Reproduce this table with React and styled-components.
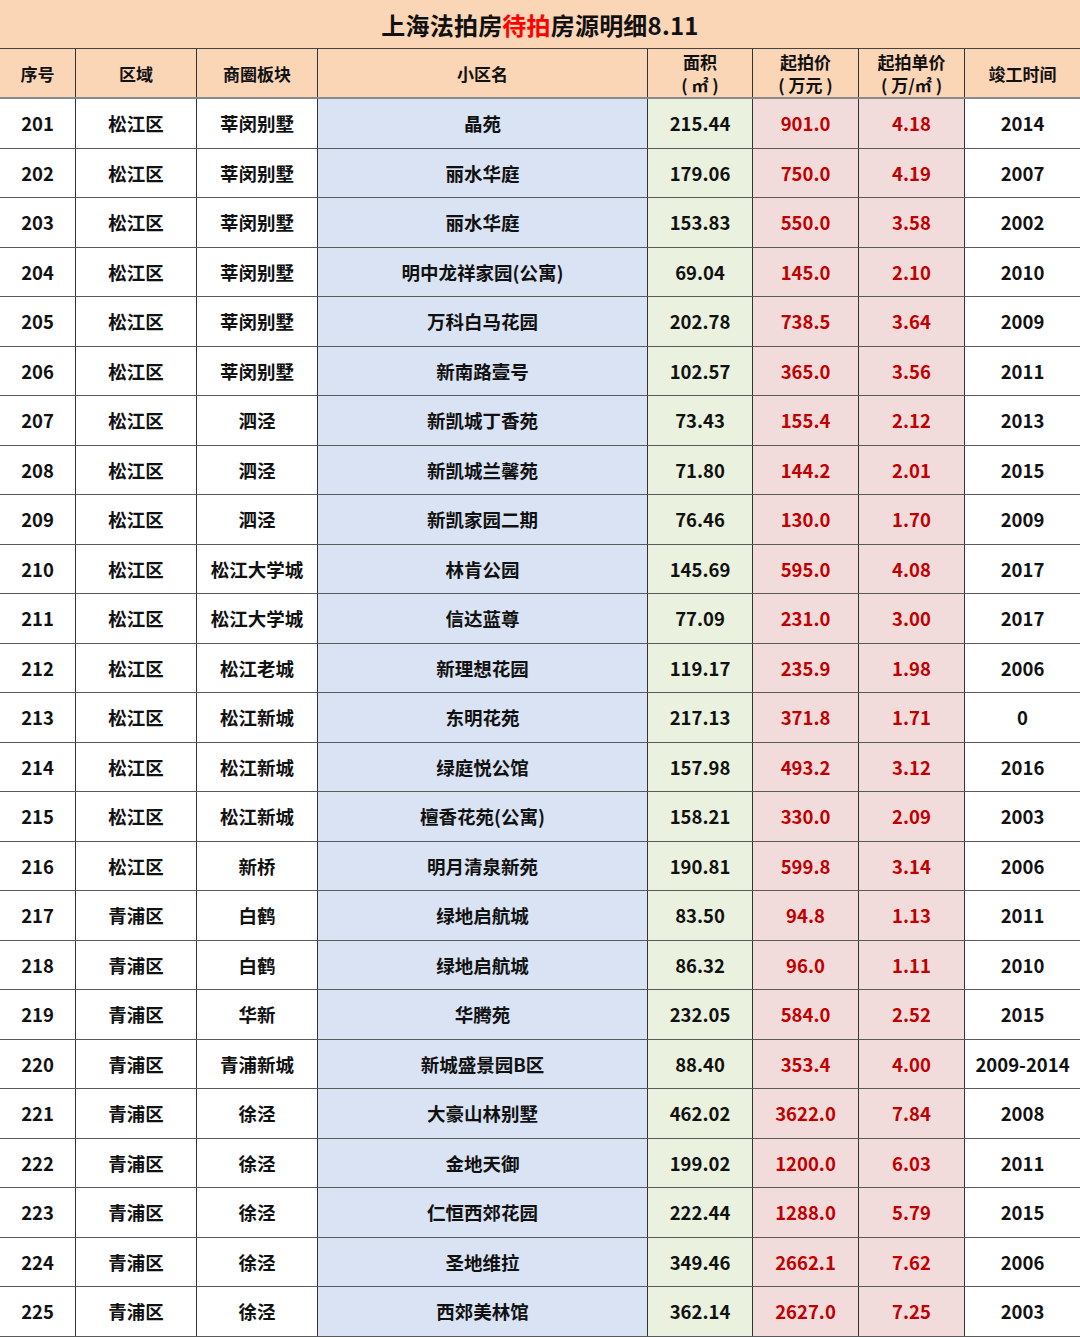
import React from 'react'
import styled, { createGlobalStyle } from 'styled-components'

const GlobalStyle = createGlobalStyle`
  html, body { margin: 0; padding: 0; background: #ffffff; }
  body { font-family: "Microsoft YaHei", "Noto Sans CJK SC", "Noto Sans", sans-serif; }
`

const COLS = '76px 121px 121px 330px 105px 106px 106px 115px'

const Sheet = styled.div`
  width: 1080px;
  font-weight: 700;
  color: #111;
`

const Title = styled.div`
  height: 49px;
  background: #fad5b6;
  border-bottom: 1px solid #444;
  box-sizing: border-box;
  display: flex;
  align-items: center;
  justify-content: center;
  font-size: 24px;
  letter-spacing: 0.2px;
  padding-top: 1px;
  span { color: #ff0000; }
`

const Row = styled.div`
  display: grid;
  grid-template-columns: ${COLS};
  height: ${p => (p.$head ? '50px' : '49.5px')};
  box-sizing: border-box;
  border-bottom: ${p => (p.$head ? '2px solid #8a8a8a' : '1.5px solid #5a5a5a')};
`

const Cell = styled.div`
  display: flex;
  flex-direction: column;
  align-items: center;
  justify-content: center;
  font-size: ${p => (p.$head ? '17px' : '18.5px')};
  line-height: ${p => (p.$head ? '23px' : '22px')};
  border-right: ${p => (p.$last ? 'none' : '1px solid #333')};
  background: ${p => p.$bg || '#fff'};
  color: ${p => p.$red ? '#c00000' : '#111'};
  white-space: pre;
`

const Line = styled.span`
  display: block;
  height: 23px;
  overflow: hidden;
`

const BG = {
  head: '#fad5b6',
  name: '#dae3f3',
  area: '#ebf1df',
  price: '#f2dcdb',
}

const rows = [
  ['201', '松江区', '莘闵别墅', '晶苑', '215.44', '901.0', '4.18', '2014'],
  ['202', '松江区', '莘闵别墅', '丽水华庭', '179.06', '750.0', '4.19', '2007'],
  ['203', '松江区', '莘闵别墅', '丽水华庭', '153.83', '550.0', '3.58', '2002'],
  ['204', '松江区', '莘闵别墅', '明中龙祥家园(公寓)', '69.04', '145.0', '2.10', '2010'],
  ['205', '松江区', '莘闵别墅', '万科白马花园', '202.78', '738.5', '3.64', '2009'],
  ['206', '松江区', '莘闵别墅', '新南路壹号', '102.57', '365.0', '3.56', '2011'],
  ['207', '松江区', '泗泾', '新凯城丁香苑', '73.43', '155.4', '2.12', '2013'],
  ['208', '松江区', '泗泾', '新凯城兰馨苑', '71.80', '144.2', '2.01', '2015'],
  ['209', '松江区', '泗泾', '新凯家园二期', '76.46', '130.0', '1.70', '2009'],
  ['210', '松江区', '松江大学城', '林肯公园', '145.69', '595.0', '4.08', '2017'],
  ['211', '松江区', '松江大学城', '信达蓝尊', '77.09', '231.0', '3.00', '2017'],
  ['212', '松江区', '松江老城', '新理想花园', '119.17', '235.9', '1.98', '2006'],
  ['213', '松江区', '松江新城', '东明花苑', '217.13', '371.8', '1.71', '0'],
  ['214', '松江区', '松江新城', '绿庭悦公馆', '157.98', '493.2', '3.12', '2016'],
  ['215', '松江区', '松江新城', '檀香花苑(公寓)', '158.21', '330.0', '2.09', '2003'],
  ['216', '松江区', '新桥', '明月清泉新苑', '190.81', '599.8', '3.14', '2006'],
  ['217', '青浦区', '白鹤', '绿地启航城', '83.50', '94.8', '1.13', '2011'],
  ['218', '青浦区', '白鹤', '绿地启航城', '86.32', '96.0', '1.11', '2010'],
  ['219', '青浦区', '华新', '华腾苑', '232.05', '584.0', '2.52', '2015'],
  ['220', '青浦区', '青浦新城', '新城盛景园B区', '88.40', '353.4', '4.00', '2009-2014'],
  ['221', '青浦区', '徐泾', '大豪山林别墅', '462.02', '3622.0', '7.84', '2008'],
  ['222', '青浦区', '徐泾', '金地天御', '199.02', '1200.0', '6.03', '2011'],
  ['223', '青浦区', '徐泾', '仁恒西郊花园', '222.44', '1288.0', '5.79', '2015'],
  ['224', '青浦区', '徐泾', '圣地维拉', '349.46', '2662.1', '7.62', '2006'],
  ['225', '青浦区', '徐泾', '西郊美林馆', '362.14', '2627.0', '7.25', '2003'],
]

const heads = [
  ['序号'],
  ['区域'],
  ['商圈板块'],
  ['小区名'],
  ['面积', '( ㎡ )'],
  ['起拍价', '( 万元 )'],
  ['起拍单价', '( 万/㎡ )'],
  ['竣工时间'],
]

function cellStyle(i) {
  if (i === 3) return { $bg: BG.name }
  if (i === 4) return { $bg: BG.area }
  if (i === 5 || i === 6) return { $bg: BG.price, $red: true }
  return {}
}

export default function App() {
  return (
    <>
      <GlobalStyle />
      <Sheet>
        <Title>上海法拍房<span>待拍</span>房源明细8.11</Title>
        <Row $head>
          {heads.map((h, i) => (
            <Cell key={i} $head $bg={BG.head} $last={i === 7}>
              {h.map(t => <Line key={t}>{t}</Line>)}
            </Cell>
          ))}
        </Row>
        {rows.map(r => (
          <Row key={r[0]}>
            {r.map((v, i) => (
              <Cell key={i} {...cellStyle(i)} $last={i === 7}>{v}</Cell>
            ))}
          </Row>
        ))}
      </Sheet>
    </>
  )
}
